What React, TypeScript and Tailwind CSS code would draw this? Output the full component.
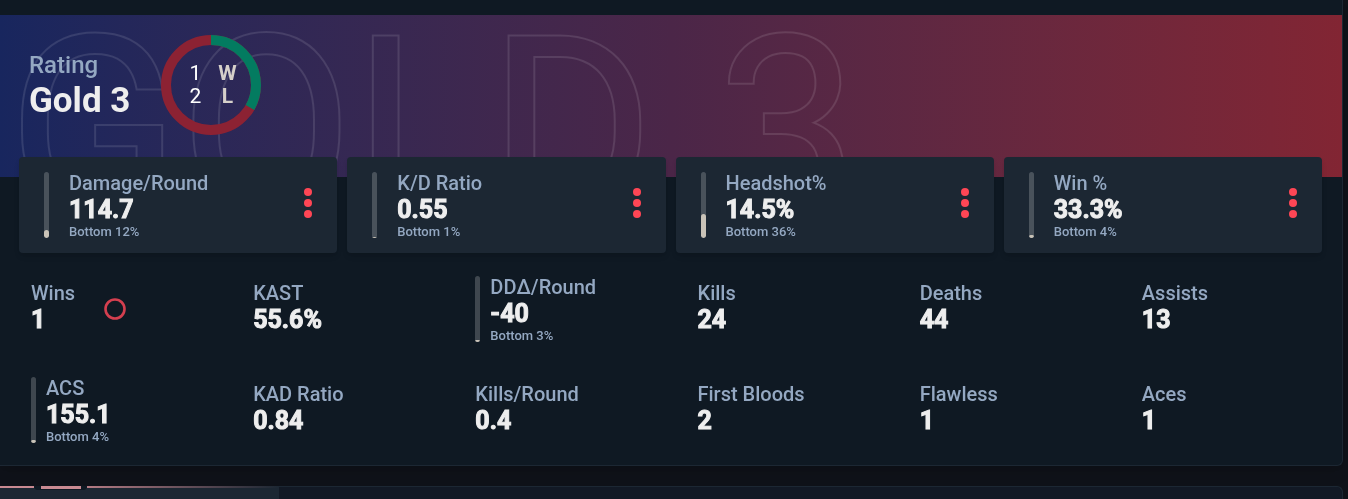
type Stat = { label: string; value: string; rank?: string; percent?: number };

const featured: Stat[] = [
  { label: "Damage/Round", value: "114.7", rank: "Bottom 12%", percent: 12 },
  { label: "K/D Ratio", value: "0.55", rank: "Bottom 1%", percent: 1 },
  { label: "Headshot%", value: "14.5%", rank: "Bottom 36%", percent: 36 },
  { label: "Win %", value: "33.3%", rank: "Bottom 4%", percent: 4 },
];

const stats: Stat[] = [
  { label: "Wins", value: "1" },
  { label: "KAST", value: "55.6%" },
  { label: "DDΔ/Round", value: "-40", rank: "Bottom 3%", percent: 3 },
  { label: "Kills", value: "24" },
  { label: "Deaths", value: "44" },
  { label: "Assists", value: "13" },
  { label: "ACS", value: "155.1", rank: "Bottom 4%", percent: 4 },
  { label: "KAD Ratio", value: "0.84" },
  { label: "Kills/Round", value: "0.4" },
  { label: "First Bloods", value: "2" },
  { label: "Flawless", value: "1" },
  { label: "Aces", value: "1" },
];

function PercentBar({ percent }: { percent: number }) {
  return (
    <div className="flex h-[66px] w-[5px] shrink-0 flex-col justify-end overflow-hidden rounded-full bg-white/20">
      <div className="w-full rounded-full bg-[#c9c3b8]" style={{ height: `${percent}%` }} />
    </div>
  );
}

function StatText({ label, value, rank }: Stat) {
  return (
    <div className="whitespace-nowrap">
      <div className="text-[20px] leading-[22px] font-medium text-[#94a8c2]">{label}</div>
      <div className="text-[25px] leading-[32px] font-bold text-[#eeeeee] [-webkit-text-stroke:1px_#eeeeee] [paint-order:stroke_fill]">
        {value}
      </div>
      {rank && <div className="text-[13px] leading-[12px] font-medium text-[#94a8c2]">{rank}</div>}
    </div>
  );
}

function WinLossRing() {
  return (
    <div className="relative size-[100px]">
      <svg viewBox="0 0 100 100" className="size-full" aria-hidden="true">
        <circle cx="50" cy="50" r="45" fill="none" stroke="#8c2233" strokeWidth="10" />
        <circle
          cx="50"
          cy="50"
          r="45"
          fill="none"
          stroke="#037b60"
          strokeWidth="10"
          pathLength="300"
          strokeDasharray="100 200"
          transform="rotate(-90 50 50)"
        />
      </svg>
      <div className="absolute inset-0 grid grid-cols-[12px_20px] place-content-center gap-x-4 pl-1 text-center text-[21px] leading-[23px] text-white">
        <span>1</span>
        <span className="font-bold text-[#d6d0ca]">W</span>
        <span>2</span>
        <span className="font-bold text-[#d6d0ca]">L</span>
      </div>
    </div>
  );
}

function Banner() {
  return (
    <header className="relative h-[162px] overflow-hidden bg-linear-to-r from-[#18265e] via-[#4b2648] to-[#822533]">
      {/* Black fill vanishes under screen blending, so only the outer outline shows. */}
      <div
        aria-hidden="true"
        className="absolute -top-8 left-2 text-[252px] leading-[294px] whitespace-nowrap text-black mix-blend-screen [-webkit-text-stroke:4px_#1c1c1c] [paint-order:stroke_fill]"
      >
        GOLD 3
      </div>
      <div className="relative flex items-start gap-[31px] pt-5 pl-[29px]">
        <div className="pt-4">
          <div className="text-2xl leading-7 font-medium text-[#94a8c2]">Rating</div>
          <h1 className="text-[35px] leading-[44px] font-bold text-[#eeeeee]">Gold 3</h1>
        </div>
        <WinLossRing />
      </div>
    </header>
  );
}

function FeaturedCard(stat: Stat) {
  return (
    <article className="flex items-center rounded bg-[#1c2733] px-[25px] py-[15px] shadow-md">
      <PercentBar percent={stat.percent ?? 0} />
      <div className="grow pl-5">
        <StatText {...stat} />
      </div>
      <svg viewBox="0 0 8 30" className="mb-1 h-[30px] w-2 fill-[#ff4655]" aria-hidden="true">
        <circle cx="4" cy="4" r="4" />
        <circle cx="4" cy="15" r="4" />
        <circle cx="4" cy="26" r="4" />
      </svg>
    </article>
  );
}

export default function App() {
  return (
    <div className="min-h-screen overflow-hidden bg-[#0f1219] pr-[5px] font-['Roboto',sans-serif]">
      <section className="rounded-br-md border-r border-b border-[#1c2733] bg-[#0f1923] pt-[15px] pb-[22px] shadow-lg">
        <Banner />
        <div className="relative -mt-5 grid grid-cols-4 gap-[10px] pr-5 pl-[19px]">
          {featured.map((stat) => (
            <FeaturedCard key={stat.label} {...stat} />
          ))}
        </div>
        <div className="mt-[23px] grid grid-cols-6 gap-x-10 gap-y-[35px] pr-[18px] pl-[31px]">
          {stats.map((stat) => (
            <div key={stat.label} className="flex h-[66px] items-center gap-[10px]">
              {stat.percent !== undefined && <PercentBar percent={stat.percent} />}
              <StatText {...stat} />
              {stat.label === "Wins" && (
                <svg viewBox="0 0 22 22" className="ml-[19px] size-[22px]" aria-hidden="true">
                  <circle cx="11" cy="11" r="9.5" fill="none" stroke="#d43f4f" strokeWidth="2.6" />
                </svg>
              )}
            </div>
          ))}
        </div>
      </section>
      <section className="mt-5 rounded-tr-md border-t border-r border-[#1c2733] bg-[#121925]">
        <div className="-mt-px flex h-[13px] w-[279px] items-start bg-[#1c2733]">
          <div className="h-[2px] w-[34px] bg-[#c98a92]" />
          <div className="flex h-1 w-[53px] items-start justify-center rounded-b bg-[#0f1923]">
            <div className="h-[3px] w-10 bg-[#c98a92]" />
          </div>
          <div className="h-[2px] grow bg-linear-to-r from-[#b47b84] to-transparent" />
        </div>
      </section>
    </div>
  );
}
